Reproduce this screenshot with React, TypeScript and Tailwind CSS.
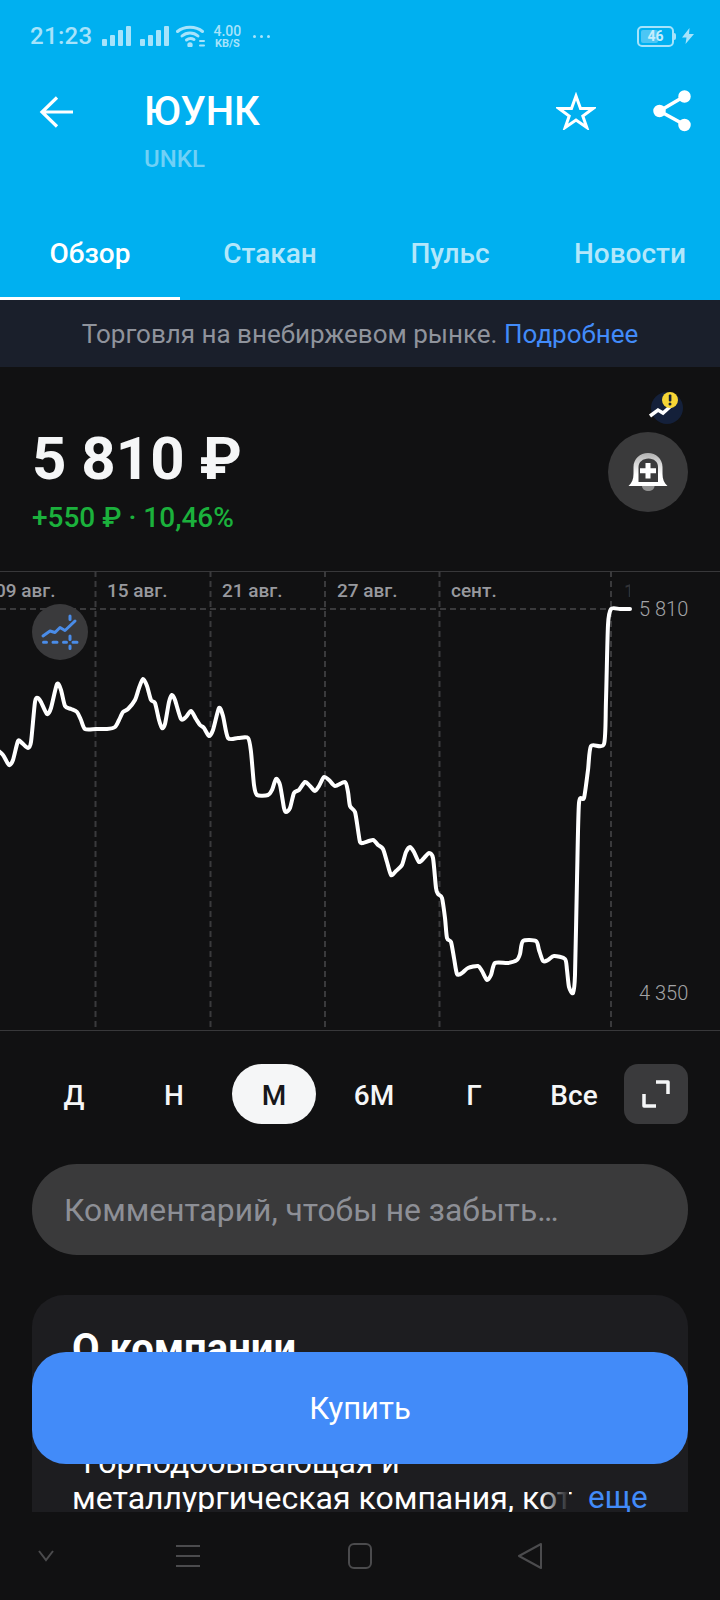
const chartPoints: [number, number][] = [
  [-4, 749], [3, 755], [9, 765], [13, 760], [18, 741], [22, 743], [28, 748], [31, 742], [35, 702], [38, 698], [41, 702], [47, 714],
  [51, 708], [57, 684], [61, 690], [65, 706], [71, 709], [77, 712], [81, 720], [85, 729], [96, 729], [107, 729], [115, 727], [119, 720],
  [123, 712], [128, 709], [135, 700], [139, 688], [143, 679], [147, 686], [151, 700], [155, 703], [159, 720], [162, 728], [165, 724], [169, 702],
  [172, 695], [175, 700], [181, 719], [186, 717], [191, 711], [196, 719], [200, 725], [204, 728], [209, 736], [213, 730], [219, 708], [223, 716],
  [228, 738], [238, 738], [248, 738], [251, 752], [254, 785], [257, 795], [268, 795], [272, 790], [276, 779], [280, 785], [284, 808], [286, 812],
  [290, 808], [294, 793], [299, 790], [305, 782], [310, 786], [315, 791], [319, 786], [324, 777], [329, 780], [335, 786], [345, 782], [348, 792],
  [350, 806], [355, 812], [358, 830], [360, 842], [363, 843], [373, 840], [378, 845], [383, 849], [387, 862], [391, 875], [396, 871], [402, 865],
  [406, 852], [410, 847], [414, 852], [419, 862], [424, 858], [429, 853], [433, 858], [436, 888], [438, 894], [442, 898], [445, 918], [447, 938],
  [451, 942], [454, 958], [457, 974], [462, 973], [468, 968], [478, 966], [482, 971], [487, 980], [491, 975], [495, 963], [508, 963], [517, 960],
  [520, 954], [523, 941], [536, 941], [539, 950], [543, 961], [548, 960], [554, 956], [565, 959], [567, 970], [569, 987], [573, 993], [575, 975],
  [577, 880], [579, 803], [584, 798], [588, 770], [591, 746], [604, 744], [606, 700], [608, 625], [611, 609], [620, 609], [630, 609]
];

function smoothPath(points: [number, number][]): string {
  let d = `M${points[0][0]} ${points[0][1]}`;
  for (let i = 0; i < points.length - 1; i++) {
    const p0 = points[Math.max(0, i - 1)];
    const p1 = points[i];
    const p2 = points[i + 1];
    const p3 = points[Math.min(points.length - 1, i + 2)];
    const c1x = p1[0] + (p2[0] - p0[0]) / 8;
    const c1y = p1[1] + (p2[1] - p0[1]) / 8;
    const c2x = p2[0] - (p3[0] - p1[0]) / 8;
    const c2y = p2[1] - (p3[1] - p1[1]) / 8;
    d += ` C${c1x} ${c1y} ${c2x} ${c2y} ${p2[0]} ${p2[1]}`;
  }
  return d;
}

const gridX = [95.5, 210.5, 325, 439.5, 611];
const tabs = ["Обзор", "Стакан", "Пульс", "Новости"];
const ranges = ["Д", "Н", "М", "6М", "Г", "Все"];
const dateLabels = [
  { text: "09 авг.", className: "left-[-5px]" },
  { text: "15 авг.", className: "left-[107px]" },
  { text: "21 авг.", className: "left-[222px]" },
  { text: "27 авг.", className: "left-[337px]" },
  { text: "сент.", className: "left-[451px]" }
];

function SignalIcon() {
  return (
    <svg width="30" height="20" viewBox="0 0 30 20" fill="#a6e3fb">
      <rect x="0" y="13" width="5" height="7" rx="1" />
      <rect x="8" y="9" width="5" height="11" rx="1" />
      <rect x="16" y="4" width="5" height="16" rx="1" />
      <rect x="24" y="0" width="5" height="20" rx="1" />
    </svg>
  );
}

function StatusBar() {
  return (
    <div className="flex h-[72px] items-center pl-[30px] pr-[26px] text-[#a6e3fb]">
      <span className="text-[24px] font-medium leading-none tracking-[0.3px]">21:23</span>
      <div className="ml-[10px] flex items-center gap-[8px]">
        <SignalIcon />
        <SignalIcon />
      </div>
      <svg className="ml-[6px]" width="30" height="22" viewBox="0 0 30 22" fill="none" stroke="#a6e3fb" strokeWidth="3" strokeLinecap="round">
        <path d="M1.500 6.500C8 .8 20 .8 26.500 6.500" />
        <path d="M6 11C10.500 7 17.500 7 22 11" />
        <path d="M10.500 15c2.500-2 5-2 7.500-.5" />
        <circle cx="14" cy="20" r="1.200" fill="#a6e3fb" />
        <path d="M24 16h4M24 20.500h4" strokeWidth="2" />
      </svg>
      <div className="ml-[6px] flex w-[30px] flex-col items-center font-medium leading-none">
        <span className="text-[14px]">4.00</span>
        <span className="text-[11px] font-bold">KB/S</span>
      </div>
      <div className="ml-[11px] flex gap-[4px]">
        <span className="h-[3px] w-[3px] rounded-full bg-[#a6e3fb]" />
        <span className="h-[3px] w-[3px] rounded-full bg-[#a6e3fb]" />
        <span className="h-[3px] w-[3px] rounded-full bg-[#a6e3fb]" />
      </div>
      <div className="ml-auto flex items-center">
        <div className="flex h-[21px] w-[37px] items-center rounded-[5px] border-2 border-[#a6e3fb] p-[2px]">
          <div className="flex h-full w-[17px] items-center justify-center rounded-[2px] bg-[#4cc6f5]">
            <span className="ml-[12px] text-[14px] font-bold leading-none text-[#c5edfc]">46</span>
          </div>
        </div>
        <span className="h-[7px] w-[2px] rounded-r-full bg-[#a6e3fb]" />
        <svg className="ml-[6px]" width="12" height="16" viewBox="0 0 12 16" fill="#a6e3fb">
          <path d="M7.500 0L0 9.500h4.500L3.500 16 12 6H7z" />
        </svg>
      </div>
    </div>
  );
}

function Header() {
  return (
    <div className="flex h-[228px] flex-col bg-[#00b0f0] text-white">
      <div className="relative flex h-[156px] pl-[38px] pr-[29px] pt-[16px]">
        <svg className="mt-[6px] shrink-0" width="36" height="36" viewBox="0 0 36 36" fill="none" stroke="#fff" strokeWidth="3.200">
          <path d="M35 18H5M19 3.500L4 18l15 14.500" />
        </svg>
        <div className="ml-[70px]">
          <div className="text-[40px] font-medium leading-[48px]">ЮУНК</div>
          <div className="mt-[9px] text-[24px] font-medium leading-[28px] text-[#70d0f6]">UNKL</div>
        </div>
        <svg className="ml-auto mt-[4px]" width="40" height="38" viewBox="0 0 40 38" fill="none" stroke="#fff" strokeWidth="3">
          <path d="M20 4l4.500 12.500H37L26.800 24l4 11.500L20 28l-10.800 7.500 4-11.500L3 16.500h12.500z" />
        </svg>
        <svg className="ml-[57px] mt-[2px]" width="38" height="42" viewBox="0 0 38 42" fill="#fff" stroke="#fff" strokeWidth="3.500">
          <path d="M6.500 21L32 6M6.500 21L32 35" fill="none" />
          <circle cx="6.500" cy="21" r="4.500" />
          <circle cx="31.500" cy="6.500" r="4.500" />
          <circle cx="31.500" cy="35" r="4.500" />
        </svg>
      </div>
      <div className="grid flex-1 grid-cols-4">
        {tabs.map((tab, index) => (
          <div
            key={tab}
            className={`flex items-center justify-center border-b-[3px] pb-[17px] text-[28px] font-medium ${
              index === 0 ? "border-white text-white" : "border-transparent text-[#b3e7fb]"
            }`}
          >
            {tab}
          </div>
        ))}
      </div>
    </div>
  );
}

function PriceBlock() {
  return (
    <div className="relative h-[204px] pl-[32px]">
      <div className="pt-[55px] text-[60px] font-bold leading-[74px] text-[#f5f6f7]">5 810 ₽</div>
      <div className="mt-[7px] text-[28px] font-medium leading-[30px] text-[#1bb13c]">+550 ₽ · 10,46%</div>
      <div className="absolute left-[651px] top-[25px] flex h-[32px] w-[32px] items-center justify-center rounded-full bg-[#14203a]">
        <svg width="40" height="36" viewBox="0 0 40 36" className="overflow-visible">
          <path d="M3 26l8-6 5 3 9-8" fill="none" stroke="#fff" strokeWidth="3.500" />
          <circle cx="23" cy="10" r="8" fill="#f7d635" />
          <rect x="21.800" y="4.500" width="2.600" height="7" rx="1" fill="#14203a" />
          <circle cx="23" cy="14" r="1.500" fill="#14203a" />
        </svg>
      </div>
      <div className="absolute left-[608px] top-[65px] flex h-[80px] w-[80px] items-center justify-center rounded-full bg-[#3a3a3b]">
        <svg width="40" height="40" viewBox="0 0 40 40">
          <defs>
            <linearGradient id="bellFill" x1="0" y1="0" x2="0" y2="1">
              <stop offset="0" stopColor="#b0b0b0" />
              <stop offset="0.65" stopColor="#ffffff" />
            </linearGradient>
          </defs>
          <path d="M14 34h12.500c0 3-3 5-6.200 5S14 37 14 34z" fill="#8f8f8f" />
          <path d="M0.500 34C4 31 5.500 27 5.500 22V15C5.500 7 12 1 20 1s14.500 6 14.500 14v7c0 5 1.500 9 5 12z" fill="url(#bellFill)" />
          <path d="M10.500 30V15c0-5 4.500-8.500 10-8.500S30 10 30 15v15z" fill="#3a3a3b" />
          <path d="M17.500 11h5v5.300H28v5h-5.500v5.300h-5v-5.300H12v-5h5.500z" fill="#fff" />
        </svg>
      </div>
    </div>
  );
}

function Chart() {
  return (
    <div className="relative h-[460px] border-y border-[#38383a]">
      <svg className="absolute left-0 top-[-1px]" width="720" height="460" viewBox="0 571 720 460">
        {gridX.map((x) => (
          <line key={x} x1={x} y1="571" x2={x} y2="1031" stroke="#3a3a3c" strokeWidth="2" strokeDasharray="6 4" />
        ))}
        <line x1="0" y1="609" x2="630" y2="609" stroke="#3a3a3c" strokeWidth="2" strokeDasharray="6 4" />
        <path d={smoothPath(chartPoints)} fill="none" stroke="#fff" strokeWidth="4" strokeLinejoin="round" strokeLinecap="round" />
      </svg>
      {dateLabels.map((label) => (
        <span key={label.text} className={`absolute top-[8px] text-[19px] font-medium leading-[22px] text-[#98999e] ${label.className}`}>
          {label.text}
        </span>
      ))}
      <span className="absolute left-[624px] top-[8px] w-[6px] overflow-hidden text-[19px] font-medium leading-[22px] text-[#333335]">1</span>
      <span className="absolute left-[639px] top-[25px] text-[20px] font-light leading-[24px] text-[#a2a3a6]">5 810</span>
      <span className="absolute left-[639px] top-[409px] text-[20px] font-light leading-[24px] text-[#a2a3a6]">4 350</span>
      <div className="absolute left-[32px] top-[32px] h-[56px] w-[56px] rounded-full bg-[#3a3a3c]">
        <svg width="56" height="56" viewBox="0 0 56 56" fill="none" stroke="#4a8ce8" strokeWidth="3" strokeLinecap="round" strokeLinejoin="round">
          <path d="M11 32l7-5 5 1.500 5-5 5 3 10-9.500" />
          <path d="M11.500 38.300h3M21 38.300h4M31.500 38.300h3M41 38.300h4M38 12v3.500M38 32v3.500M38 42v2.500" />
        </svg>
      </div>
    </div>
  );
}

function RangePicker() {
  return (
    <div className="flex h-[133px] items-start pl-[24px] pr-[32px] pt-[33px]">
      {ranges.map((range) => (
        <div
          key={range}
          className={`flex h-[60px] w-[100px] items-center justify-center text-[28px] font-medium ${
            range === "М" ? "text-[#17171a]" : "text-[#f5f6f7]"
          }`}
        >
          <span
            className={
              range === "М" ? "flex h-[60px] w-[84px] items-center justify-center rounded-[30px] bg-[#f5f6f7] pt-[3px]" : "pt-[4px]"
            }
          >
            {range}
          </span>
        </div>
      ))}
      <div className="ml-auto flex h-[60px] w-[64px] items-center justify-center rounded-[14px] bg-[#3a3a3c]">
        <svg width="30" height="30" viewBox="0 0 30 30" fill="none" stroke="#f5f6f7" strokeWidth="3.500" strokeLinejoin="round">
          <path d="M15 3h12v12M3 15v12h12" />
        </svg>
      </div>
    </div>
  );
}

function CompanyCard() {
  return (
    <div className="mx-[32px] mt-[40px] h-[300px] rounded-t-[32px] bg-[#1d1d20] px-[40px] pt-[32px] text-white">
      <div className="text-[40px] font-bold leading-[44px]">О компании</div>
      <div className="relative mt-[73px] whitespace-nowrap text-[32px] leading-[36px]">
        <div>“Горнодобывающая и</div>
        <div>металлургическая компания, кот</div>
        <span className="absolute bottom-0 left-[468px] h-[36px] w-[29px] bg-gradient-to-r from-transparent to-[#1d1d20]" />
        <span className="absolute bottom-0 left-[516px] text-[31.5px] text-[#428bf9]">еще</span>
      </div>
    </div>
  );
}

function NavBar() {
  return (
    <div className="flex h-[88px] shrink-0 items-center bg-[#111112]">
      <svg className="ml-[37px]" width="18" height="14" viewBox="0 0 18 14" fill="none" stroke="#4b4b4d" strokeWidth="2">
        <path d="M2 2l7 9 7-9" />
      </svg>
      <svg className="ml-[120px]" width="26" height="24" viewBox="0 0 26 24" fill="none" stroke="#4b4b4d" strokeWidth="2">
        <path d="M1 2h24M1 12h24M1 22h24" />
      </svg>
      <svg className="ml-[147px]" width="24" height="26" viewBox="0 0 24 26" fill="none" stroke="#4b4b4d" strokeWidth="2">
        <rect x="1" y="1" width="22" height="24" rx="5" />
      </svg>
      <svg className="ml-[145px]" width="26" height="28" viewBox="0 0 26 28" fill="none" stroke="#4b4b4d" strokeWidth="2" strokeLinejoin="round">
        <path d="M24 2L2 14l22 12z" />
      </svg>
    </div>
  );
}

export default function App() {
  return (
    <div className="relative flex h-[1600px] w-[720px] flex-col overflow-hidden bg-[#111112] font-['Roboto',sans-serif]">
      <div className="bg-[#00b0f0]">
        <StatusBar />
        <Header />
      </div>
      <div className="flex h-[67px] items-center justify-center bg-[#1a1f2b] pt-[2px] text-[26px] text-[#8f939c]">
        <span>
          Торговля на внебиржевом рынке. <span className="text-[#428bf9]">Подробнее</span>
        </span>
      </div>
      <PriceBlock />
      <Chart />
      <RangePicker />
      <div className="mx-[32px] flex h-[91px] shrink-0 items-center rounded-[45px] bg-[#3a3a3b] pl-[32px] pt-[3px] text-[31.8px] text-[#8d8f96]">
        Комментарий, чтобы не забыть…
      </div>
      <div className="min-h-0 flex-1 overflow-hidden">
        <CompanyCard />
      </div>
      <NavBar />
      <button
        type="button"
        className="absolute left-[32px] top-[1352px] h-[112px] w-[656px] rounded-[34px] bg-[#428bf9] pt-[2px] text-[31px] text-white"
      >
        Купить
      </button>
    </div>
  );
}
